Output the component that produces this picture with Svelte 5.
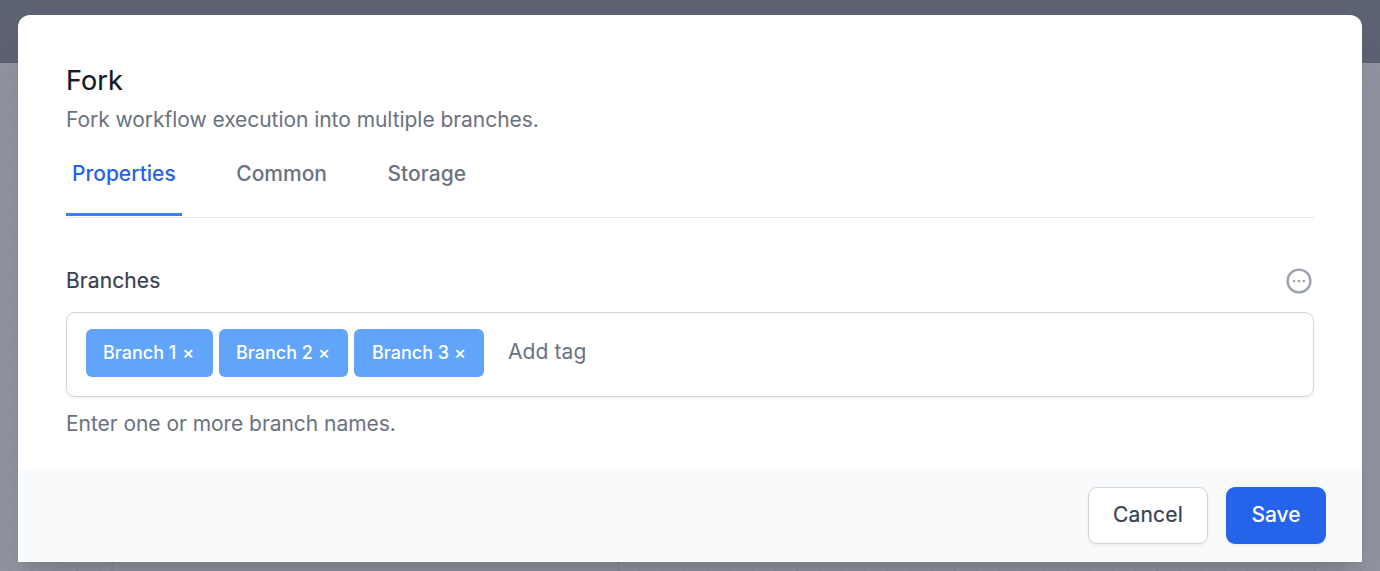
<script>
  const tabs = ['Properties', 'Common', 'Storage'];
  let active = $state('Properties');
  let tags = $state(['Branch 1', 'Branch 2', 'Branch 3']);
  const widths = [127, 129, 130];
  const remove = (tag) => (tags = tags.filter((t) => t !== tag));
</script>

<div class="page">
  <div class="topbar"></div>
  <div class="node"></div>
  <div class="dialog" role="dialog" aria-labelledby="title">
    <div class="body">
      <h2 id="title">Fork</h2>
      <p class="desc">Fork workflow execution into multiple branches.</p>
      <nav>
        {#each tabs as tab}
          <button class="tab" class:active={tab === active} onclick={() => (active = tab)}>{tab}</button>
        {/each}
      </nav>
      <div class="label-row">
        <span class="label">Branches</span>
        <svg width="30" height="30" viewBox="0 0 30 30" fill="none">
          <circle cx="15" cy="15" r="11.4" stroke="#9ca3af" stroke-width="2.4" />
          <g fill="#9ca3af">
            <rect x="8.9" y="13.9" width="2.3" height="2.3" rx=".5" />
            <rect x="13.8" y="13.9" width="2.3" height="2.3" rx=".5" />
            <rect x="18.7" y="13.9" width="2.3" height="2.3" rx=".5" />
          </g>
        </svg>
      </div>
      <div class="field">
        {#each tags as tag, i}
          <span class="tag" style:width="{widths[i]}px">{tag}<button class="x" onclick={() => remove(tag)}>×</button></span>
        {/each}
        <span class="add">Add tag</span>
      </div>
      <p class="hint">Enter one or more branch names.</p>
    </div>
    <footer>
      <button class="btn cancel">Cancel</button>
      <button class="btn save">Save</button>
    </footer>
  </div>
</div>

<style>
  :global(body) { margin: 0; }
  .page {
    position: relative;
    box-sizing: border-box;
    width: 1380px;
    height: 571px;
    padding: 15px 18px 0;
    overflow: hidden;
    font-family: Inter, sans-serif;
    font-size: 21px;
    background: radial-gradient(circle at 11.25px 11.25px, #898d99 1.1px, transparent 1.6px) -1.5px 63px / 22.5px 22.5px, #9094a0;
  }
  .topbar { position: absolute; inset: 0 0 auto; height: 63px; background: #5b6271; }
  .node {
    position: absolute;
    left: 111px;
    top: 520px;
    width: 503px;
    height: 60px;
    border: solid #8a8e9a;
    border-width: 0 3px;
    background: #9094a0;
  }
  .dialog {
    position: relative;
    height: 547px;
    border-radius: 12px 12px 0 0;
    background: #fff;
    box-shadow: 0 30px 38px -8px rgb(0 0 0 / .1), 0 12px 15px -9px rgb(0 0 0 / .1);
  }
  .body { box-sizing: border-box; height: 454px; padding: 48px 48px 0; }
  h2, p { margin: 0; }
  h2 { font-size: 27px; line-height: 36px; font-weight: 400; letter-spacing: .1px; color: #111827; -webkit-text-stroke: .2px #111827; }
  .desc, .hint { color: #6b7280; letter-spacing: -.05px; line-height: 30px; }
  .desc { margin-top: 6px; }
  button { font-family: inherit; font-size: inherit; border: 0; padding: 0; background: none; cursor: pointer; }
  nav { box-sizing: border-box; display: flex; gap: 48.5px; height: 68px; margin-top: 15px; border-bottom: 1px solid #e5e7eb; }
  .tab {
    box-sizing: border-box;
    height: 66px;
    padding: 0 6px 15px;
    border-bottom: 3px solid transparent;
    line-height: 30px;
    font-weight: 500;
    letter-spacing: 0;
    color: #6b7280;
  }
  .tab.active { color: #2563eb; border-color: #3b82f6; }
  .label-row { display: flex; align-items: center; justify-content: space-between; height: 30px; margin-top: 48px; color: #374151; font-weight: 400; letter-spacing: .1px; -webkit-text-stroke: .2px #374151; }
  .label { margin-top: -1px; }
  .field {
    box-sizing: border-box;
    display: flex;
    align-items: center;
    gap: 6px;
    height: 85px;
    margin-top: 16px;
    padding: 0 19px 4px;
    border: 1px solid #d1d5db;
    border-radius: 9px;
    box-shadow: 0 2px 3px rgb(0 0 0 / .05);
  }
  .tag {
    box-sizing: border-box;
    height: 48px;
    padding-left: 17px;
    border-radius: 6px;
    background: #60a5fa;
    color: #fff;
    font-size: 18px;
    font-weight: 500;
    line-height: 48px;
    white-space: nowrap;
  }
  .tag:nth-child(3) { padding-left: 18px; }
  .x { margin-left: 6px; color: #fff; font-weight: 500; }
  .tag:not(:first-child) .x { margin-left: 5px; }
  .add { margin: 0 0 2px 18px; color: #6b7280; letter-spacing: .1px; }
  .hint { margin-top: 12px; }
  footer { box-sizing: border-box; display: flex; justify-content: flex-end; gap: 18px; height: 93px; padding: 18px 36px; background: #f9fafb; }
  .btn { box-sizing: border-box; height: 57px; padding-bottom: 2px; border-radius: 9px; font-weight: 500; box-shadow: 0 2px 3px rgb(0 0 0 / .05); }
  .cancel { width: 120px; border: 1px solid #d1d5db; background: #fff; color: #374151; font-weight: 400; letter-spacing: .15px; -webkit-text-stroke: .2px #374151; }
  .save { width: 100px; background: #2563eb; color: #fff; }
</style>
